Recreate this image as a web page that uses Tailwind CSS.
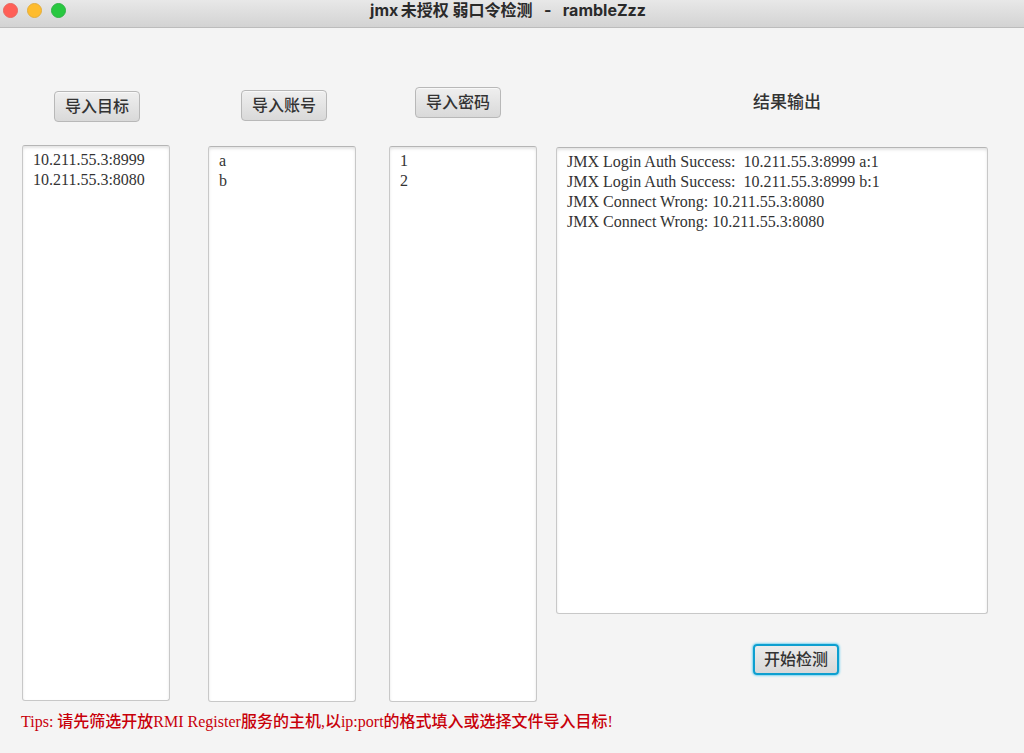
<!DOCTYPE html>
<html lang="zh-CN">
<head>
    <meta charset="UTF-8">
    <meta name="viewport" content="width=device-width, initial-scale=1.0">
    <title>jmx未授权 弱口令检测 - rambleZzz</title>
    <script src="https://cdn.jsdelivr.net/npm/@tailwindcss/browser@4"></script>
</head>
<body class="bg-[#f4f4f4] h-screen flex flex-col overflow-hidden text-base text-[#333333] font-['Liberation_Serif','Noto_Sans_CJK_SC',serif]">
    <!-- Title bar -->
    <header class="relative h-7 shrink-0 flex justify-center pr-2 border-b border-[#bcbcbc] bg-linear-to-b from-[#e8e8e8] to-[#d3d3d3]">
        <div class="absolute left-[3px] top-[3px] flex gap-[9px]">
            <button type="button" aria-label="Close" class="size-[15px] rounded-full bg-[#ff5f57] border border-[#e9655d]"></button>
            <button type="button" aria-label="Minimize" class="size-[15px] rounded-full bg-[#febc2e] border border-[#e3ad3c]"></button>
            <button type="button" aria-label="Zoom" class="size-[15px] rounded-full bg-[#28c840] border border-[#2fb344]"></button>
        </div>
        <h1 class="text-base leading-[21px] font-bold text-[#2a2a2a] whitespace-pre font-['Inter','Noto_Sans_CJK_SC',sans-serif]">jmx&thinsp;未授权 弱口令检测   -   rambleZzz</h1>
    </header>

    <main class="flex-1 min-h-0 flex pl-[22px] pr-9">
        <section class="w-[148px] mr-[38px] flex flex-col pt-[63px]">
            <button type="button" class="w-[86px] h-[31px] ml-8 mb-[23px] pb-1 shrink-0 flex items-center justify-center font-['Noto_Sans_CJK_SC',sans-serif] font-medium rounded border border-[#b8b8b8] bg-linear-to-b from-[#efefef] to-[#d9d9d9] inset-shadow-[0_1px_#f8f8f8]">导入目标</button>
            <textarea aria-label="导入目标" class="w-full flex-1 resize-none outline-none px-[10px] py-1 leading-[20px] bg-white rounded-[3px] border border-[#c8c8c8] border-t-[#b5b5b5] inset-shadow-[0_2px_3px_#e4e4e4]">10.211.55.3:8999
10.211.55.3:8080</textarea>
        </section>

        <section class="w-[148px] mr-[33px] flex flex-col pt-[62px] -mb-px">
            <button type="button" class="w-[86px] h-[31px] ml-[33px] mb-[25px] pb-1 shrink-0 flex items-center justify-center font-['Noto_Sans_CJK_SC',sans-serif] font-medium rounded border border-[#b8b8b8] bg-linear-to-b from-[#efefef] to-[#d9d9d9] inset-shadow-[0_1px_#f8f8f8]">导入账号</button>
            <textarea aria-label="导入账号" class="w-full flex-1 resize-none outline-none px-[10px] py-1 leading-[20px] bg-white rounded-[3px] border border-[#c8c8c8] border-t-[#b5b5b5] inset-shadow-[0_2px_3px_#e4e4e4]">a
b</textarea>
        </section>

        <section class="w-[148px] mr-[19px] flex flex-col pt-[59px] -mb-px">
            <button type="button" class="w-[86px] h-[31px] ml-[26px] mb-[28px] pb-1 shrink-0 flex items-center justify-center font-['Noto_Sans_CJK_SC',sans-serif] font-medium rounded border border-[#b8b8b8] bg-linear-to-b from-[#efefef] to-[#d9d9d9] inset-shadow-[0_1px_#f8f8f8]">导入密码</button>
            <textarea aria-label="导入密码" class="w-full flex-1 resize-none outline-none px-[10px] py-1 leading-[20px] bg-white rounded-[3px] border border-[#c8c8c8] border-t-[#b5b5b5] inset-shadow-[0_2px_3px_#e4e4e4]">1
2</textarea>
        </section>

        <section class="flex-1 flex flex-col pt-[61px]">
            <label for="output" class="self-center ml-[30px] mb-[34px] leading-6 text-[17px] font-medium font-['Noto_Sans_CJK_SC',sans-serif]">结果输出</label>
            <textarea id="output" readonly class="w-full flex-1 resize-none outline-none px-[10px] py-1 leading-[20px] bg-white rounded-[3px] border border-[#c8c8c8] border-t-[#b5b5b5] inset-shadow-[0_2px_3px_#e4e4e4]">JMX Login Auth Success:  10.211.55.3:8999 a:1
JMX Login Auth Success:  10.211.55.3:8999 b:1
JMX Connect Wrong: 10.211.55.3:8080
JMX Connect Wrong: 10.211.55.3:8080</textarea>
            <button type="button" class="self-center w-[86px] h-[31px] ml-12 mt-[30px] mb-[26px] pb-1 shrink-0 flex items-center justify-center font-['Noto_Sans_CJK_SC',sans-serif] font-medium rounded border-2 border-[#0d9fd0] bg-linear-to-b from-[#ececec] to-[#d8d8d8] shadow-[0_0_2px_1px_#7fd6f2]">开始检测</button>
        </section>
    </main>

    <p class="shrink-0 mt-[9px] mb-[19px] px-[21px] leading-6 text-[#c8000a]">Tips: <span class="font-medium">请先筛选开放</span>RMI Register<span class="font-medium">服务的主机</span>,<span class="font-medium">以</span>ip:port<span class="font-medium">的格式填入或选择文件导入目标</span>!</p>
</body>
</html>
